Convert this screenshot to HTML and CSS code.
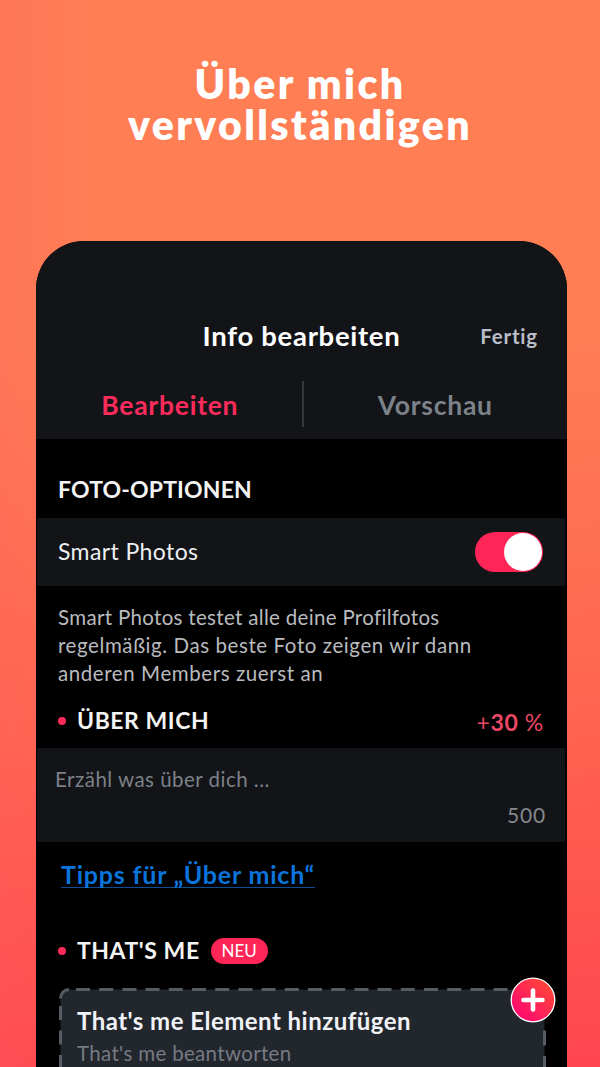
FILE: index.html
```
<!DOCTYPE html>
<html lang="de">
<head>
    <meta charset="UTF-8">
    <meta name="viewport" content="width=device-width, initial-scale=1.0">
    <title>Info bearbeiten</title>
    <link rel="stylesheet" href="styles.css">
</head>
<body>
    <h1 class="headline">Über mich<br>vervollständigen</h1>

    <div class="phone">
        <header class="top">
            <div class="title-bar">
                <h2 class="title">Info bearbeiten</h2>
                <span class="done">Fertig</span>
            </div>
            <nav class="tabs">
                <div class="tab active">Bearbeiten</div>
                <div class="tab">Vorschau</div>
            </nav>
        </header>

        <h3 class="section-title photo-title">FOTO-OPTIONEN</h3>
        <div class="panel switch-row">
            <span class="switch-label">Smart Photos</span>
            <div class="switch"><div class="knob"></div></div>
        </div>
        <p class="description">
            <span class="tight">Smart Photos testet alle deine Profilfotos</span><br>
            regelmäßig. Das beste Foto zeigen wir dann<br>
            anderen Members zuerst an
        </p>

        <div class="section-head about-head">
            <span class="dot"></span>
            <h3 class="section-title spaced">ÜBER MICH</h3>
            <span class="percent"><span class="sign">+</span>30 <span class="sign">%</span></span>
        </div>
        <div class="panel about">
            <span class="placeholder">Erzähl was über dich ...</span>
            <span class="count">500</span>
        </div>
        <div class="tips-row"><a class="tips">Tipps für „Über mich“</a></div>

        <div class="section-head me-head">
            <span class="dot"></span>
            <h3 class="section-title spaced">THAT'S ME</h3>
            <span class="badge">NEU</span>
        </div>
        <div class="card">
            <svg class="card-border" width="487" height="120" viewBox="0 0 487 120">
                <rect x="1.5" y="1.5" width="484" height="150" rx="9" fill="#22262d"/>
                <g fill="none" stroke="#565b64" stroke-width="3">
                    <path d="M1.5 10.5Q2 2.5 10 1.5"/>
                    <path d="M1.5 18V120" stroke-dasharray="14 10.5"/>
                    <path d="M17 1.5H455" stroke-dasharray="14 9.2"/>
                    <path d="M485.5 42.5V120" stroke-dasharray="15 10.5"/>
                </g>
            </svg>
            <div class="card-text">
                <div class="card-title">That's me Element hinzufügen</div>
                <div class="card-sub">That's me beantworten</div>
            </div>
            <svg class="add" width="46" height="46" viewBox="0 0 46 46">
                <defs>
                    <linearGradient id="add-fill" x1="0" y1="1" x2="1" y2="0">
                        <stop offset="0.15" stop-color="#fe0a70"/>
                        <stop offset="0.85" stop-color="#ff4438"/>
                    </linearGradient>
                </defs>
                <circle cx="23" cy="23" r="21.8" fill="url(#add-fill)" stroke="#fff" stroke-width="1.3"/>
                <path d="M23 13.5v19M13.5 23h19" stroke="#fff" stroke-width="4.6" stroke-linecap="round"/>
            </svg>
        </div>
    </div>
</body>
</html>
```
FILE: styles.css
```
* {
    box-sizing: border-box;
}

body {
    margin: 0;
    width: 600px;
    height: 1067px;
    overflow: hidden;
    display: flex;
    flex-direction: column;
    font-family: Lato, "Liberation Sans", sans-serif;
    background:
        linear-gradient(90deg, rgba(255, 90, 100, 0.22), rgba(255, 90, 100, 0) 16%),
        linear-gradient(176deg, #ff7e54 0%, #ff7e54 32%, #ff6650 66%, #ff464f 100%);
}

h1, h2, h3, p {
    margin: 0;
}

/* Headline */
.headline {
    height: 241px;
    padding-top: 63px;
    flex: none;
    text-align: center;
    color: #fff;
    font-size: 41px;
    line-height: 41px;
    font-weight: 800;
    letter-spacing: 2.4px;
}

/* Phone */
.phone {
    flex: none;
    width: 531px;
    height: 826px;
    margin-left: 36px;
    background: #000;
    border-radius: 48px 48px 0 0;
    overflow: hidden;
}

.top {
    height: 198px;
    background: #121417;
    padding-top: 74px;
}

.title-bar {
    display: grid;
    grid-template-columns: 1fr auto 1fr;
    align-items: center;
    height: 40px;
}

.title {
    grid-column: 2;
    color: #fff;
    font-size: 27.5px;
    font-weight: 700;
    letter-spacing: 0.7px;
}

.done {
    justify-self: end;
    margin-right: 29px;
    padding-top: 1px;
    color: #b9bec8;
    font-size: 20.5px;
    font-weight: 700;
    letter-spacing: 0.8px;
}

.tabs {
    display: flex;
    height: 46px;
    margin-top: 26px;
}

.tab {
    flex: 1;
    display: flex;
    align-items: center;
    justify-content: center;
    color: #7c828a;
    font-size: 26.5px;
    font-weight: 700;
    letter-spacing: 0.75px;
    padding-top: 2px;
}

.tab.active {
    color: #fb2b5b;
    padding-left: 2px;
    border-right: 2px solid #34373c;
}

/* Sections */
.section-title {
    color: #f3f3f3;
    font-size: 23px;
    line-height: 28px;
    font-weight: 700;
    letter-spacing: 0.15px;
}

.spaced {
    letter-spacing: 0.55px;
    margin-top: -2px;
}

.photo-title {
    padding: 36px 0 15px 22px;
}

.panel {
    margin: 0 2px 0 1px;
    background: #121417;
}

.switch-row {
    display: flex;
    align-items: center;
    justify-content: space-between;
    height: 68px;
    padding: 0 22px 0 21px;
}

.switch-label {
    color: #eef0f3;
    font-size: 23px;
    letter-spacing: 0.4px;
    padding-bottom: 2px;
}

.switch {
    width: 68px;
    height: 40px;
    padding: 1px;
    border-radius: 20px;
    background: #ff2556;
    display: flex;
    justify-content: flex-end;
}

.knob {
    width: 38px;
    height: 38px;
    border-radius: 50%;
    background: #fff;
}

.description {
    padding: 17px 0 0 22px;
    height: 120px;
    color: #b9bbbe;
    font-size: 20.5px;
    line-height: 28px;
    letter-spacing: 0.58px;
    white-space: nowrap;
}

.tight {
    letter-spacing: 0.32px;
}

.section-head {
    display: flex;
    align-items: center;
    padding: 0 23px 0 22px;
}

.dot {
    width: 8px;
    height: 8px;
    margin-right: 11px;
    border-radius: 50%;
    background: #ff2b5b;
}

.about-head {
    height: 42px;
    padding-bottom: 13px;
}

.percent {
    margin-left: auto;
    color: #ec4765;
    font-size: 23px;
    font-weight: 700;
    letter-spacing: 0.7px;
    padding-top: 3px;
}

.sign {
    font-weight: 400;
}

.about {
    display: flex;
    flex-direction: column;
    justify-content: space-between;
    height: 94px;
    padding: 19px 19px 15px 18px;
    color: #7d8188;
    font-size: 20.5px;
    line-height: 24px;
}

.placeholder {
    letter-spacing: 0.48px;
}

.count {
    align-self: flex-end;
    font-size: 21px;
    letter-spacing: 0.8px;
    color: #85898e;
}

.tips-row {
    padding: 18px 0 0 25px;
    height: 90px;
}

.tips {
    display: inline-block;
    height: 28px;
    color: #0b74dc;
    font-size: 25px;
    line-height: 29px;
    font-weight: 700;
    letter-spacing: 0.8px;
    border-bottom: 1px solid #0b4f96;
}

.me-head {
    height: 38px;
}

.badge {
    margin-left: 11px;
    width: 57px;
    height: 26px;
    border-radius: 13px;
    background: #ff2556;
    color: #fff;
    font-size: 17px;
    line-height: 25px;
    text-align: center;
}

/* Card */
.card {
    position: relative;
    width: 487px;
    height: 120px;
    margin: 18px 0 0 23px;
}

.card-border {
    position: absolute;
    left: 0;
    top: 0;
}

.card-text {
    position: relative;
    padding: 17px 0 0 18px;
}

.card-title {
    color: #f0f2f7;
    font-size: 24px;
    line-height: 32px;
    font-weight: 700;
    letter-spacing: 0.47px;
}

.card-sub {
    color: #767a83;
    font-size: 20.5px;
    line-height: 32px;
    letter-spacing: 0.33px;
}

.add {
    position: absolute;
    left: 451px;
    top: -11px;
}
```
